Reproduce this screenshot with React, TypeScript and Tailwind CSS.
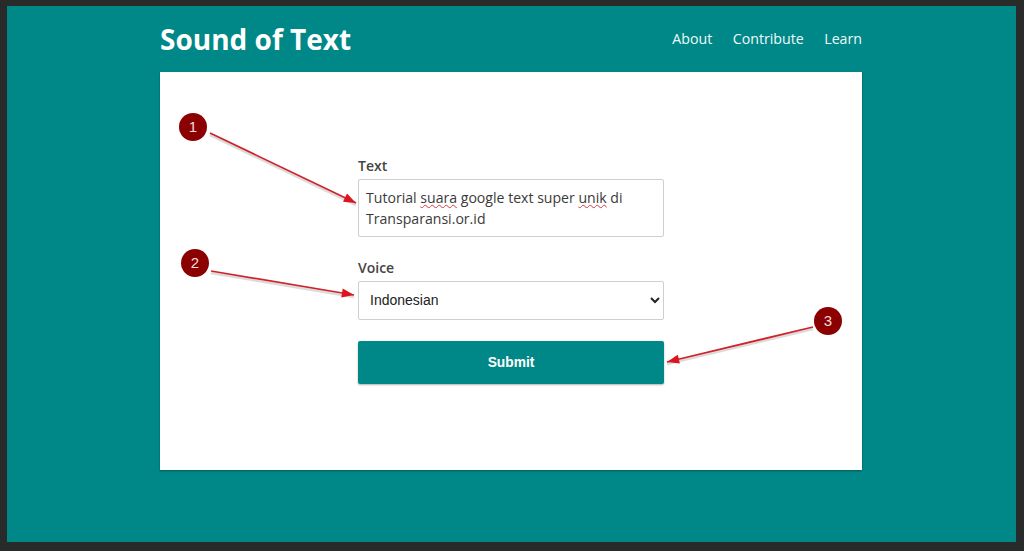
import React from "react";

const Marker = ({ n, className }: { n: number; className: string }) => (
  <div
    className={`absolute w-[28px] h-[28px] rounded-full bg-[#8b0000] text-[#f3dede] flex items-center justify-center text-[15px] font-['Liberation_Sans',sans-serif] ${className}`}
  >
    {n}
  </div>
);

const Arrow = ({ x1, y1, x2, y2 }: { x1: number; y1: number; x2: number; y2: number }) => {
  const angle = Math.atan2(y2 - y1, x2 - x1);
  const len = 13;
  const spread = 0.36;
  const p1 = `${x2 - len * Math.cos(angle - spread)},${y2 - len * Math.sin(angle - spread)}`;
  const p2 = `${x2 - len * Math.cos(angle + spread)},${y2 - len * Math.sin(angle + spread)}`;
  return (
    <g>
      <line x1={x1} y1={y1 + 2} x2={x2} y2={y2 + 2} stroke="#000" strokeOpacity="0.14" strokeWidth="2.5" />
      <line x1={x1} y1={y1} x2={x2} y2={y2} stroke="#cf2229" strokeWidth="1.75" />
      <polygon points={`${x2},${y2} ${p1} ${p2}`} fill="#dc151d" />
    </g>
  );
};

const Misspelled = ({ children }: { children: string }) => (
  <span className="underline decoration-wavy decoration-[#d9383f] decoration-1 underline-offset-[1px]">{children}</span>
);

const App = () => {
  return (
    <div className="relative h-[551px] w-[1024px] overflow-hidden bg-[#292b2a] pt-[6px] pl-[7px] pr-[8px] pb-[9px] font-['Open_Sans',sans-serif]">
      <div className="h-full bg-[#008888] pl-[153px] pr-[154px]">
        <header className="flex h-[66px] items-center justify-between">
          <h1 className="text-[28px] font-bold text-white leading-none">Sound of Text</h1>
          <nav className="flex gap-[20.5px] pb-[1px] text-[14.2px] text-[#eefafa]">
            <a>About</a>
            <a>Contribute</a>
            <a>Learn</a>
          </nav>
        </header>

        <main className="flex h-[398px] flex-col items-center bg-white pt-[85px] shadow-[0_1px_2px_rgba(0,0,0,0.35)]">
          <form className="flex w-[306px] flex-col">
            <label className="mb-[4px] text-[14px] leading-[18px] font-semibold text-[#444]">Text</label>
            <div className="h-[58px] rounded-[2px] border border-[#cfcfcf] px-[7px] py-[6.5px] text-[14.1px] leading-[21px] text-[#3a3a3a]">
              <p>
                <span>Tutorial </span>
                <Misspelled>suara</Misspelled>
                <span> google text super </span>
                <Misspelled>unik</Misspelled>
                <span> di</span>
              </p>
              <p>Transparansi.or.id</p>
            </div>

            <label className="mt-[22px] mb-[4px] text-[14px] leading-[18px] font-semibold text-[#444]">Voice</label>
            <select className="h-[39px] rounded-[2px] border border-[#cfcfcf] bg-white px-[7px] pb-[2px] font-['Liberation_Sans',sans-serif] text-[14px] text-[#222]">
              <option>Indonesian</option>
            </select>

            <button
              type="button"
              className="mt-[21px] h-[43px] rounded-[2px] bg-[#008888] pt-[1px] font-['Liberation_Sans',sans-serif] text-[13.75px] font-bold text-white shadow-[0_1px_2px_rgba(0,0,0,0.3)]"
            >
              Submit
            </button>
          </form>
        </main>
      </div>

      {/* annotations pasted over the screenshot */}
      <svg className="absolute left-0 top-0 pointer-events-none" width="1024" height="551">
        <Arrow x1={210} y1={133} x2={356} y2={203} />
        <Arrow x1={211} y1={271} x2={354} y2={295} />
        <Arrow x1={813} y1={327} x2={667} y2={362} />
      </svg>
      <Marker n={1} className="left-[179px] top-[113px]" />
      <Marker n={2} className="left-[181px] top-[249px]" />
      <Marker n={3} className="left-[814px] top-[307px]" />
    </div>
  );
};

export default App;
